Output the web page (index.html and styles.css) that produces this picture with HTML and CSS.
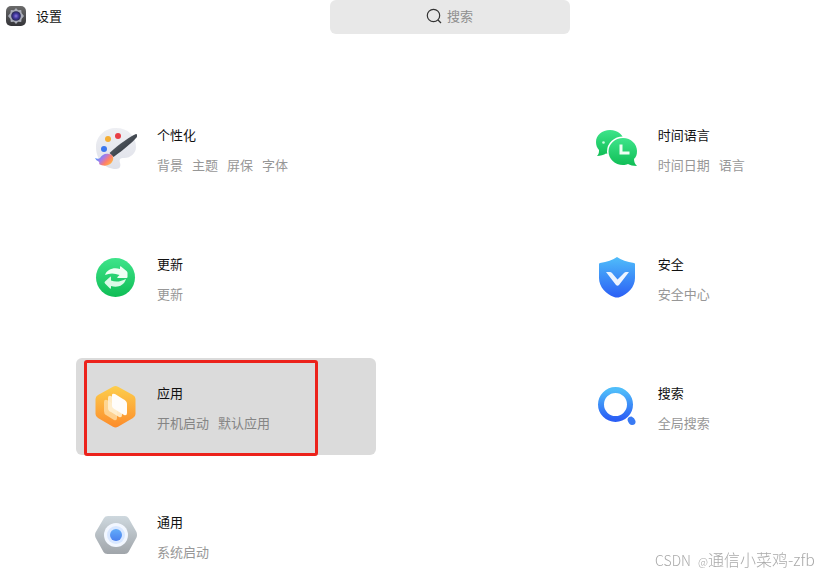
FILE: index.html
```html
<!DOCTYPE html>
<html lang="zh-CN">
<head>
    <meta charset="UTF-8">
    <meta name="viewport" content="width=device-width, initial-scale=1.0">
    <title>设置</title>
    <link rel="stylesheet" href="styles.css">
</head>
<body>
    <header class="header">
        <div class="brand">
            <svg class="brand-icon" viewBox="0 0 20 20" aria-hidden="true">
                <defs>
                    <linearGradient id="gear-bg" x1="0" y1="0" x2="0" y2="1"><stop offset="0" stop-color="#6b6b6b"/><stop offset="1" stop-color="#343438"/></linearGradient>
                    <radialGradient id="gear-eye"><stop offset="0" stop-color="#8a78dc"/><stop offset=".5" stop-color="#4238a0"/><stop offset="1" stop-color="#252450"/></radialGradient>
                </defs>
                <rect width="20" height="20" rx="5" fill="url(#gear-bg)"/>
                <path d="M10 2l2 2.200 3.200-.2.400 3 2.400 3-2.400 3-.4 3-3.200-.2L10 18l-2-2.200-3.200.2-.4-3L2 10l2.400-3 .4-3 3.200.2z" fill="#a9acb8"/>
                <circle cx="10" cy="10" r="4.800" fill="url(#gear-eye)"/>
            </svg>
            <span>设置</span>
        </div>
        <label class="search">
            <svg class="search-icon" viewBox="0 0 16 16" aria-hidden="true">
                <circle cx="7.500" cy="7.500" r="6.200"/>
                <path d="M12 12l3 3"/>
            </svg>
            <input type="text" placeholder="搜索" aria-label="搜索">
        </label>
    </header>

    <main class="grid">
        <a class="card" href="#">
            <svg class="icon" viewBox="0 0 42 42" aria-hidden="true">
                <defs>
                    <linearGradient id="pal" x1="0" y1="0" x2="0" y2="1"><stop offset="0" stop-color="#eeeff3"/><stop offset="1" stop-color="#dfe1e9"/></linearGradient>
                    <linearGradient id="handle" x1="0" y1="0" x2="1" y2="1"><stop offset="0" stop-color="#6a7077"/><stop offset="1" stop-color="#20262f"/></linearGradient>
                    <linearGradient id="bristle" x1="0" y1=".2" x2="1" y2=".8"><stop offset="0" stop-color="#2f9cff"/><stop offset=".4" stop-color="#a97be8"/><stop offset=".65" stop-color="#ff7e6b"/><stop offset="1" stop-color="#ffc13b"/></linearGradient>
                </defs>
                <path d="M21 0C10 0 1 8 1 19c0 13 9 22 20 22 4 0 5-3 4-6-1-4 0-5 4-5 7 0 12-5 12-11C41 8 33 0 21 0z" fill="url(#pal)"/>
                <circle cx="13" cy="11" r="3" fill="#f5ae35"/>
                <circle cx="23" cy="8" r="3" fill="#e83e46"/>
                <circle cx="9" cy="21" r="3" fill="#3d78ee"/>
                <path d="M41 6c1.500 0 1.500 2 .5 3.500C38 14 28 22 18.500 29L14.500 25C24 16 36 8 41 6z" fill="url(#handle)"/>
                <path d="M14 26c3 0 5 3 4 6-2 6-9 7-14 4 1-1 0-2-1-3-1 0-2-1-3-3 2 1 4 1 5 0 2-3 5-5 9-4z" fill="url(#bristle)"/>
            </svg>
            <div class="text">
                <div class="title">个性化</div>
                <div class="tags"><span>背景</span><span>主题</span><span>屏保</span><span>字体</span></div>
            </div>
        </a>

        <a class="card" href="#">
            <svg class="icon" viewBox="0 0 42 42" aria-hidden="true">
                <defs>
                    <linearGradient id="green" x1="0" y1="0" x2="0" y2="1"><stop offset="0" stop-color="#3ee48a"/><stop offset="1" stop-color="#0fbd55"/></linearGradient>
                </defs>
                <path d="M14 2c8 0 14 5 14 12S22 26 14 26q-2 0-4-.5C8 27 4 28 1 28c2-2 2-4 2-6-2-2-3-5-3-8C0 7 6 2 14 2z" fill="url(#green)"/>
                <circle cx="7.500" cy="14.500" r="1.300" fill="#c8ffdf"/>
                <path d="M27 10c8 0 14 6 14 13 0 4-1 6-3 8 0 3 1 5 3 7-4 0-7-1-9-2-2 .7-3 1-5 1-8 0-14.500-6-14.500-13.500S19 10 27 10z" fill="url(#green)" stroke="#fff" stroke-width="3" paint-order="stroke"/>
                <path d="M25 16.500V25h8.500" fill="none" stroke="#effff4" stroke-width="3"/>
            </svg>
            <div class="text">
                <div class="title">时间语言</div>
                <div class="tags"><span>时间日期</span><span>语言</span></div>
            </div>
        </a>

        <a class="card" href="#">
            <svg class="icon" viewBox="0 0 42 42" aria-hidden="true">
                <circle cx="20.500" cy="20.500" r="19.500" fill="url(#green)"/>
                <path d="M10 18c2-6 9-8 15-6v-2q0-1 1-.5l5.500 4.500q1 1 1 2v4q0 1-1 1h-8.500q-1.500 0-.5-1l2-2c-5-2-10-2-14.500 0z" fill="#effff4"/>
                <path d="M31 22c-2 7-9 9-15 7v2q0 1-1 .5l-5-5q-1-1 0-2l5-4.500q1-1 1 .5v3c5 2 10 1 15-1.500z" fill="#dcfae7"/>
            </svg>
            <div class="text">
                <div class="title">更新</div>
                <div class="tags"><span>更新</span></div>
            </div>
        </a>

        <a class="card" href="#">
            <svg class="icon" viewBox="0 0 42 42" aria-hidden="true">
                <defs>
                    <linearGradient id="blue" x1="0" y1="0" x2="0" y2="1"><stop offset="0" stop-color="#4fbdfa"/><stop offset="1" stop-color="#2b5ff5"/></linearGradient>
                </defs>
                <path d="M21 0c4 3 10 5 17 6 1 0 1 1 1 2v13c0 9-7 16-15 19q-3 1-6 0C10 37 3 30 3 21V8c0-1 0-2 1-2 7-1 13-3 17-6z" fill="url(#blue)"/>
                <path d="M10 15h4q1 0 2 1l5.500 6.500L28 16q1-1 2-1h3L23 28q-1.500 1.500-3 0z" fill="#edf4ff"/>
            </svg>
            <div class="text">
                <div class="title">安全</div>
                <div class="tags"><span>安全中心</span></div>
            </div>
        </a>

        <a class="card active" href="#">
            <svg class="icon" viewBox="0 0 42 42" aria-hidden="true">
                <defs>
                    <linearGradient id="orange" x1="0" y1="0" x2="0" y2="1"><stop offset="0" stop-color="#fdce4c"/><stop offset="1" stop-color="#fc8c2b"/></linearGradient>
                </defs>
                <path d="M18 .7q2.500-1.400 5 0L38 9q2.500 1.500 2.500 4v15q0 2.500-2.500 4l-15 8.700q-2.500 1.400-5 0L3 32q-2.500-1.500-2.500-4V13q0-2.500 2.500-4z" fill="url(#orange)"/>
                <path d="M9 16q0-3 3-2l8 5q2 1 2 4v9q0 3-3 2l-8-5q-2-1-2-4z" fill="#ffe2ae" opacity=".75"/>
                <path d="M13 12q0-3 3-2l8 5q3 1 3 4v10q0 3-3 2l-8-5q-3-1-3-4z" fill="#ffefd0" opacity=".9"/>
                <path d="M17 9q0-2 3-1l8 5q4 2 4 5v9q0 3-3 2l-8-5q-4-2-4-4z" fill="#fffdfa"/>
            </svg>
            <div class="text">
                <div class="title">应用</div>
                <div class="tags"><span>开机启动</span><span>默认应用</span></div>
            </div>
            <div class="mark"></div>
        </a>

        <a class="card" href="#">
            <svg class="icon" viewBox="0 0 42 42" aria-hidden="true">
                <circle cx="19.500" cy="18.500" r="14.500" fill="none" stroke="url(#blue)" stroke-width="6"/>
                <path d="M31.500 34q0-3.500 4-3.500 3 1 4 4.500.5 4-3.500 4-3 0-4.500-5z" fill="#397af4"/>
            </svg>
            <div class="text">
                <div class="title">搜索</div>
                <div class="tags"><span>全局搜索</span></div>
            </div>
        </a>

        <a class="card" href="#">
            <svg class="icon" viewBox="0 0 42 42" aria-hidden="true">
                <defs>
                    <linearGradient id="steel" x1="0" y1="0" x2="0" y2="1"><stop offset="0" stop-color="#ced8de"/><stop offset="1" stop-color="#a0a5aa"/></linearGradient>
                    <linearGradient id="lens" x1="0" y1="0" x2="0" y2="1"><stop offset="0" stop-color="#62acfa"/><stop offset="1" stop-color="#4a80ee"/></linearGradient>
                </defs>
                <path d="M13 1h17q2 0 3.500 2l8 14q1 3 0 5.500l-8 14.500q-1 2-4 2h-17q-3 0-4-2l-8-14.500q-1-2.500 0-5l8.500-14.500q1-2 4-2z" fill="url(#steel)"/>
                <circle cx="21" cy="20" r="12" fill="#f2f7ff"/>
                <circle cx="21" cy="20" r="9" fill="#d8e7ff"/>
                <circle cx="21" cy="20" r="6" fill="url(#lens)"/>
            </svg>
            <div class="text">
                <div class="title">通用</div>
                <div class="tags"><span>系统启动</span></div>
            </div>
        </a>
    </main>

    <div class="watermark"><span class="site">CSDN</span><span class="at">@</span>通信小菜鸡-zfb</div>
</body>
</html>
```
FILE: styles.css
```css
body, html {
    margin: 0;
    padding: 0;
    height: 100%;
    overflow: hidden;
    background-color: #fff;
    color: #111;
    font-family: "Noto Sans CJK SC", sans-serif;
    font-size: 13px;
}
.header {
    display: flex;
    height: 34px;
}
.brand {
    display: flex;
    align-items: center;
    gap: 10px;
    width: 40%;
    max-width: 330px;
    box-sizing: border-box;
    padding: 0 0 3px 6px;
}
.brand-icon {
    width: 20px;
    height: 20px;
}
.search {
    display: flex;
    align-items: center;
    gap: 5px;
    width: 240px;
    box-sizing: border-box;
    padding: 0 0 3px 96px;
    border-radius: 6px;
    background-color: #e8e8e8;
    cursor: text;
}
.search-icon {
    flex: none;
    width: 16px;
    height: 16px;
    fill: none;
    stroke: #333;
    stroke-width: 1.2;
}
.search input {
    flex: 1;
    min-width: 0;
    padding: 0;
    border: none;
    outline: none;
    background: transparent;
    font: inherit;
}
.search input::placeholder {
    color: #8f8f8f;
}
.grid {
    display: grid;
    grid-template-columns: 2fr 1fr;
    row-gap: 32px;
    padding: 66px 0 0 76px;
}
.card {
    position: relative;
    display: flex;
    align-items: center;
    gap: 20px;
    width: 100%;
    max-width: 300px;
    height: 97px;
    box-sizing: border-box;
    padding-left: 19px;
    border-radius: 6px;
    color: inherit;
    text-decoration: none;
}
.card:hover,
.card.active {
    background-color: #dbdbdb;
}
.icon {
    flex: none;
    width: 42px;
    height: 42px;
}
.text {
    padding-top: 2px;
    line-height: 30px;
    white-space: nowrap;
}
.tags {
    display: flex;
    gap: 9px;
    color: #979797;
}
.active .tags {
    color: #858585;
}
/* red highlight frame over the selected card */
.mark {
    position: absolute;
    top: 2px;
    left: 8px;
    width: 234px;
    height: 96px;
    box-sizing: border-box;
    border: 3px solid #ec221b;
    border-radius: 3px;
    pointer-events: none;
}
.watermark {
    position: fixed;
    right: 12px;
    bottom: 3px;
    color: #aaa;
    font-size: 16px;
    font-weight: 300;
    line-height: 24px;
}
.watermark .site {
    margin-right: 7px;
    font-size: 14px;
}
.watermark .at {
    font-size: 11px;
}
```
